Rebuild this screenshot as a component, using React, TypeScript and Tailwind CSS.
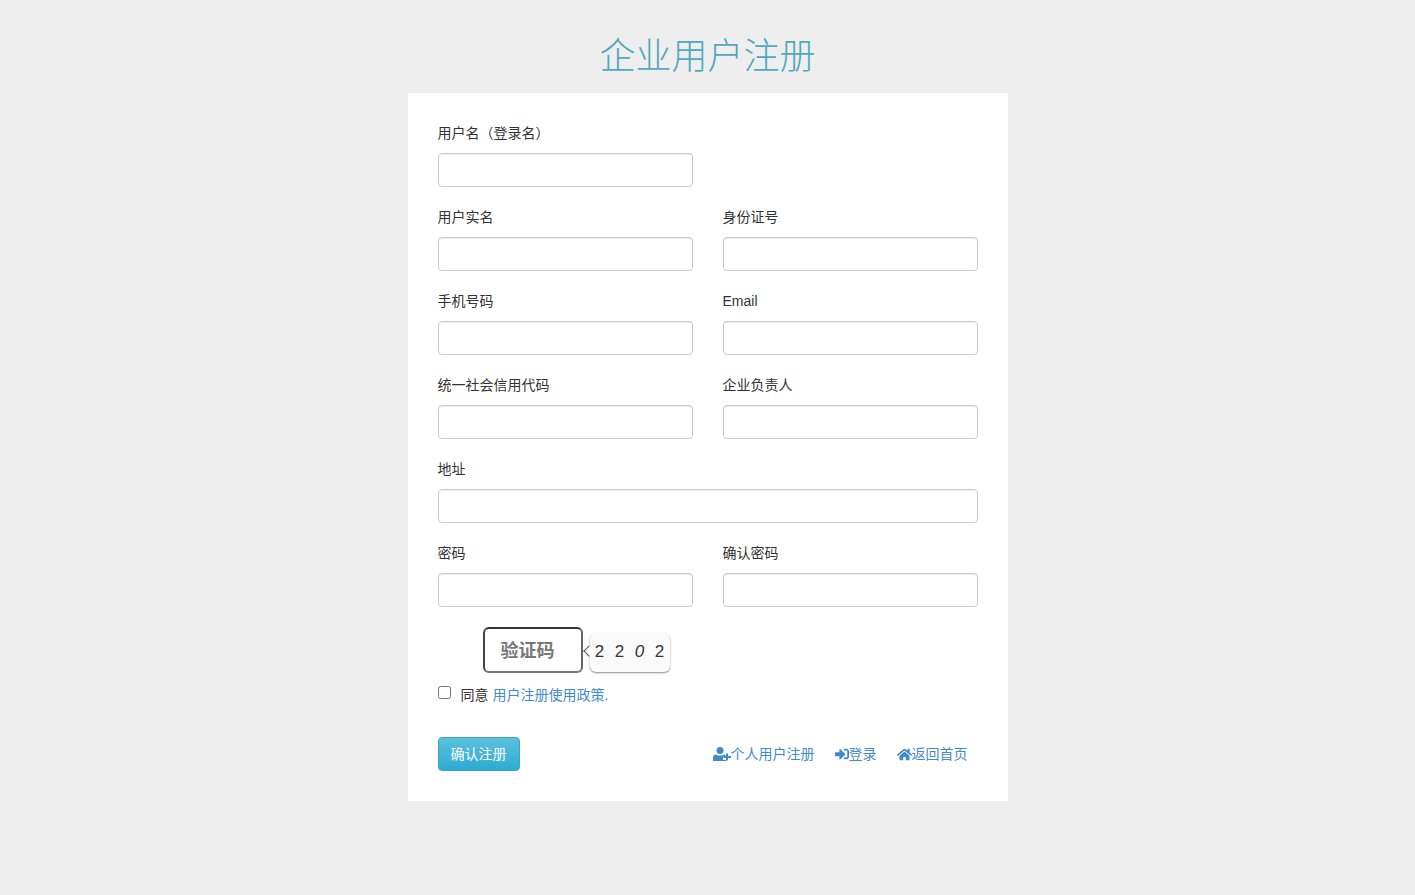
import type { ReactNode } from 'react'
import { FaHome, FaSignInAlt } from 'react-icons/fa'

const fontStack = '[font-family:"Liberation_Sans","Noto_Sans_CJK_SC",sans-serif]'

function Field({ label, type = 'text' }: { label: string; type?: string }) {
  return (
    <div className="min-w-0">
      <label className="block h-5 text-sm leading-5 text-[#333]">{label}</label>
      <input
        type={type}
        className="mt-[10px] block h-[34px] w-full rounded border border-[#ccc] bg-white px-3 shadow-[inset_0_1px_1px_rgba(0,0,0,0.075)]"
      />
    </div>
  )
}

function Row({ children }: { children: ReactNode }) {
  return <div className="mb-5 grid grid-cols-2 gap-x-[30px]">{children}</div>
}

// thicker plus than the react-icons user-plus
function UserPlusIcon() {
  return (
    <svg className="h-[14px] w-[18px]" viewBox="0 0 18 14" fill="currentColor">
      <circle cx="7" cy="3.5" r="3.5" />
      <path d="M0 14V10.5C0 8.6 1.4 7.5 3.2 7.5c1 .8 2.4 1.2 3.8 1.2s2.8-.4 3.8-1.2c.6 0 1.200.1 1.700.4V9.500H10V13H13V14Z" />
      <path d="M13 6.500H15V9H18V11H15V13.500H13V11H10.500V9H13Z" />
    </svg>
  )
}

export default function App() {
  return (
    <div className={`min-h-[895px] bg-[#eee] ${fontStack}`}>
      <h1 className="pt-[37px] text-center text-4xl leading-10 font-light text-[#4fa9bc]">企业用户注册</h1>
      <div className="mx-auto mt-4 h-[708px] w-[600px] bg-white px-[30px] pt-[30px]">
        <Row>
          <Field label="用户名（登录名）" />
        </Row>
        <Row>
          <Field label="用户实名" />
          <Field label="身份证号" />
        </Row>
        <Row>
          <Field label="手机号码" />
          <Field label="Email" type="email" />
        </Row>
        <Row>
          <Field label="统一社会信用代码" />
          <Field label="企业负责人" />
        </Row>
        <div className="mb-5">
          <Field label="地址" />
        </div>
        <Row>
          <Field label="密码" type="password" />
          <Field label="确认密码" type="password" />
        </Row>

        <div className="flex items-start pl-[45px]">
          <div className="flex h-[46px] w-[100px] items-center rounded-md border-2 border-t-[#333] border-r-[#666] border-b-[#777] border-l-[#444] pt-px pl-4 text-lg font-bold text-[#777]">
            验证码
          </div>
          <div className="relative mt-1.5 ml-[7px] grid h-[39px] w-20 grid-cols-4 items-center rounded-md bg-[#fafafa] pb-px text-center text-[17px] text-[#333] shadow-[0_1px_2px_rgba(0,0,0,0.45)]">
            <span className="absolute top-[14px] -left-[5px] size-2 rotate-45 border-b border-l border-[#555] bg-white" />
            <span>2</span>
            <span>2</span>
            <span className="italic">0</span>
            <span>2</span>
          </div>
        </div>

        <div className="mt-3 flex h-5 items-center text-sm text-[#333]">
          <input type="checkbox" className="mb-1.5 size-[13px]" />
          <span className="ml-[10px]">同意</span>
          <a className="ml-1 text-[#428bca]">用户注册使用政策.</a>
        </div>

        <div className="mt-8 flex items-center justify-between pr-2.5">
          <button className="h-[34px] w-[82px] rounded border border-[#3ba5c9] bg-gradient-to-b from-[#5bc0de] to-[#2aabd2] text-sm text-white">
            确认注册
          </button>
          <div className="flex items-center gap-5 text-sm text-[#428bca]">
            <a className="flex items-center">
              <UserPlusIcon />
              个人用户注册
            </a>
            <a className="flex items-center">
              <FaSignInAlt className="size-3.5" />
              登录
            </a>
            <a className="flex items-center">
              <FaHome className="size-[15px]" />
              返回首页
            </a>
          </div>
        </div>
      </div>
    </div>
  )
}
